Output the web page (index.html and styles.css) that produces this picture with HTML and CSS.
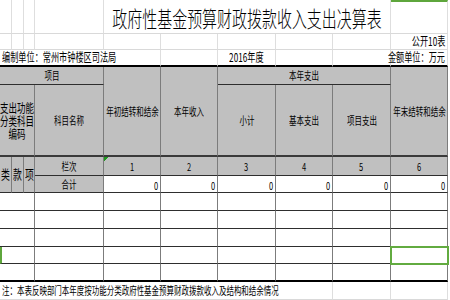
FILE: index.html
```html
<!DOCTYPE html>
<html lang="zh">
<head>
<meta charset="utf-8">
<title>政府性基金预算财政拨款收入支出决算表</title>
<link rel="stylesheet" href="styles.css">
</head>
<body>
<div class="sheet">
  <div class="grid">
    <!-- row 1: title -->
    <div class="g"></div><div class="g"></div><div class="g"></div><div class="g"></div>
    <div class="g title span5"><span class="t">政府性基金预算财政拨款收入支出决算表</span></div>
    <div class="g selcol"></div>

    <!-- row 2 -->
    <div class="g"></div><div class="g"></div><div class="g"></div><div class="g"></div>
    <div class="g"></div><div class="g"></div><div class="g"></div><div class="g"></div>
    <div class="g"></div>
    <div class="g info right"><span class="t tr">公开10表</span></div>

    <!-- row 3 -->
    <div class="g r3 info left span5"><span class="t tl">编制单位：常州市钟楼区司法局</span></div>
    <div class="g r3"></div>
    <div class="g r3 info"><span class="t">2016年度</span></div>
    <div class="g r3"></div>
    <div class="g r3"></div>
    <div class="g r3 info right"><span class="t tr">金额单位：万元</span></div>

    <!-- row 4: header -->
    <div class="c h span4"><span class="t">项目</span></div>
    <div class="c h rs2 thick"><span class="t">年初结转和结余</span></div>
    <div class="c h rs2 thick"><span class="t">本年收入</span></div>
    <div class="c h span3"><span class="t">本年支出</span></div>
    <div class="c h rs2 thick"><span class="t">年末结转和结余</span></div>

    <!-- row 5 -->
    <div class="c h span3 thick"><span class="t wrap">支出功能分类科目编码</span></div>
    <div class="c h thick"><span class="t">科目名称</span></div>
    <div class="c h thick"><span class="t">小计</span></div>
    <div class="c h thick"><span class="t">基本支出</span></div>
    <div class="c h thick"><span class="t">项目支出</span></div>

    <!-- row 6 -->
    <div class="c h rs2 big"><span class="t">类</span></div>
    <div class="c h rs2 big"><span class="t">款</span></div>
    <div class="c h rs2 big"><span class="t">项</span></div>
    <div class="c h"><span class="t">栏次</span></div>
    <div class="c h mark"><span class="t">1</span></div>
    <div class="c h"><span class="t">2</span></div>
    <div class="c h"><span class="t">3</span></div>
    <div class="c h"><span class="t">4</span></div>
    <div class="c h"><span class="t">5</span></div>
    <div class="c h"><span class="t">6</span></div>

    <!-- row 7 -->
    <div class="c h"><span class="t">合计</span></div>
    <div class="c num"><span class="t tr">0</span></div>
    <div class="c num"><span class="t tr">0</span></div>
    <div class="c num"><span class="t tr">0</span></div>
    <div class="c num"><span class="t tr">0</span></div>
    <div class="c num"><span class="t tr">0</span></div>
    <div class="c num"><span class="t tr">0</span></div>

    <!-- rows 8-12 -->
    <div class="c span3"></div><div class="c"></div>
    <div class="c"></div><div class="c"></div><div class="c"></div><div class="c"></div><div class="c"></div><div class="c"></div>

    <div class="c span3"></div><div class="c"></div>
    <div class="c"></div><div class="c"></div><div class="c"></div><div class="c"></div><div class="c"></div><div class="c"></div>

    <div class="c span3"></div><div class="c"></div>
    <div class="c"></div><div class="c"></div><div class="c"></div><div class="c"></div><div class="c"></div><div class="c"></div>

    <div class="c span3 selrow"></div><div class="c"></div>
    <div class="c"></div><div class="c"></div><div class="c"></div><div class="c"></div><div class="c"></div><div class="c selcell"></div>

    <div class="c span3 last"></div><div class="c last"></div>
    <div class="c last"></div><div class="c last"></div><div class="c last"></div><div class="c last"></div><div class="c last"></div><div class="c last"></div>

    <!-- row 13: note -->
    <div class="g note left span8"><span class="t tl">注：本表反映部门本年度按功能分类政府性基金预算财政拨款收入及结构和结余情况</span></div>
    <div class="g"></div>
    <div class="g"></div>
  </div>
</div>
</body>
</html>
```

FILE: styles.css
```css
html, body {
  margin: 0;
  padding: 0;
  background: #fff;
}

body {
  width: 450px;
  height: 300px;
  overflow: hidden;
  font-family: "Noto Sans CJK SC", "Noto Sans", sans-serif;
  color: #000;
}

.sheet {
  width: 450px;
  height: 300px;
  overflow: hidden;
}

.grid {
  display: grid;
  grid-template-columns: 12px 12px 11px 69px 57px 57px 58px 57px 58px 57px;
  grid-template-rows: 34px 16px 17px 18px 72px 19px 17px 18px 18px 18px 17px 18px 18px;
  width: 448px;
}

.grid > div {
  box-sizing: border-box;
  display: flex;
  align-items: center;
  justify-content: center;
  font-size: 11px;
  line-height: 1.15;
  white-space: nowrap;
  min-width: 0;
}

/* Excel-like narrow glyphs */
.t {
  display: inline-block;
  flex: none;
  transform: scaleX(0.68);
  transform-origin: 50% 50%;
}

.tl { transform-origin: 0 50%; }
.tr { transform-origin: 100% 50%; }

/* spans */
.span3 { grid-column: span 3; }
.span4 { grid-column: span 4; }
.span5 { grid-column: span 5; }
.span8 { grid-column: span 8; }
.rs2 { grid-row: span 2; }

/* faint spreadsheet gridlines */
.g {
  border-right: 1px solid #dedede;
  border-bottom: 1px solid #d9d9d9;
}

.title {
  font-size: 22px !important;
  font-weight: 300;
  padding-top: 2px;
}

.selcol {
  border-top: 2px solid #5ea63c;
}

.info {
  font-size: 12px !important;
  align-items: flex-end !important;
  padding-bottom: 1px;
}

.right {
  justify-content: flex-end !important;
  padding-right: 2px;
}

.left {
  justify-content: flex-start !important;
  padding-left: 2px;
}

.r3 {
  border-bottom: 2px solid #000;
}

/* table cells */
.c {
  border-right: 1px solid #7c7c7c;
  border-bottom: 1px solid #2e2e2e;
  background: #fff;
}

.h {
  background: #c0c0c0;
}

.big {
  font-size: 13px !important;
}

.thick {
  border-bottom: 2px solid #3a3a3a;
}

.wrap {
  width: 52px;
  font-size: 12.5px;
  white-space: normal;
  text-align: center;
  line-height: 13px;
}

.mark {
  background: linear-gradient(135deg, #1f9a1f 0 3px, #c0c0c0 3px);
}

.num {
  justify-content: flex-end !important;
  padding-right: 2px;
  padding-top: 2px;
}

.last {
  border-bottom: 2px solid #000;
}

.selrow {
  border-left: 2px solid #5ea63c;
}

.selcell {
  position: relative;
  z-index: 1;
  outline: 2px solid #62ab40;
  outline-offset: -1px;
}

.note {
  font-size: 11px;
}
```
